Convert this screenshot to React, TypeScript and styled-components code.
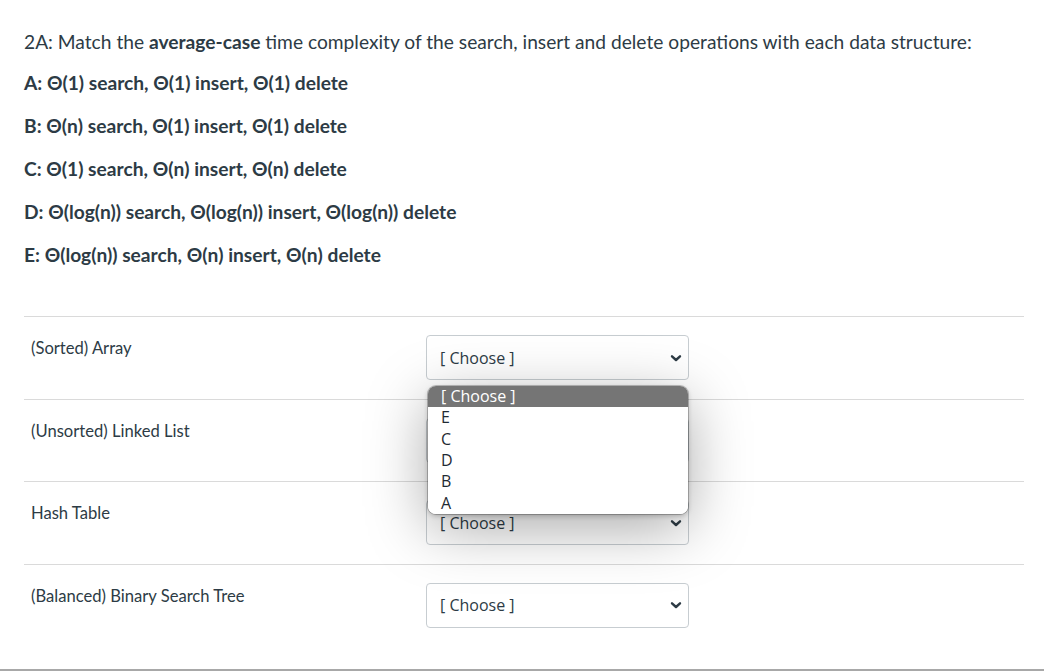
import { createGlobalStyle, styled } from "styled-components"

const GlobalStyle = createGlobalStyle`
html, body {
    margin: 0;
    padding: 0;
    background: #fff;
}
body {
    font-family: Lato, "Liberation Sans", sans-serif;
    color: #2d3b45;
}
`

const StyledPage = styled.div`
width: 1044px;
height: 672px;
overflow: hidden;
box-sizing: border-box;
display: flex;
flex-direction: column;
`

const StyledQuestion = styled.section`
padding: 28px 20px 0 24px;
flex: 1;

p {
    margin: 0;
    font-size: 19.2px;
    line-height: 27px;
}
p.title {
    margin-bottom: 14px;
}
p.answer {
    font-size: 19.2px;
    font-weight: 700;
    margin-bottom: 16px;
}
`

const StyledTable = styled.div`
margin-top: 48px;
width: 1000px;
display: flex;
flex-direction: column;
`

const StyledRow = styled.div`
box-sizing: border-box;
height: 82.67px;
border-top: 1px solid #dadada;
display: grid;
grid-template-columns: 402px 263px;

span.label {
    padding: 19px 0 0 7px;
    font-size: 16.6px;
    line-height: 24px;
}
`

const StyledSelect = styled.div`
position: relative;
margin-top: 18px;
box-sizing: border-box;
height: 45px;
border: 1px solid #c7cdd1;
border-radius: 4px;
background: #fff;
display: flex;
align-items: center;
justify-content: space-between;
padding: 0 6px 0 13px;

span {
    font-family: "Open Sans", "Noto Sans", sans-serif;
    font-size: 16px;
    color: #2d3b45;
}
svg {
    width: 12px;
    height: 12px;
}
`

const StyledPopup = styled.ul`
position: absolute;
top: 50px;
left: 1px;
width: 260px;
margin: 0;
padding: 0;
list-style: none;
background: #fff;
border-radius: 8px;
overflow: hidden;
box-shadow: 0 0 0 1px rgba(0, 0, 0, 0.22), 0 2px 5px rgba(0, 0, 0, 0.22), 0 14px 60px rgba(0, 0, 0, 0.34);
z-index: 5;
`

const StyledOption = styled.li<{ $active?: boolean }>`
height: 21.33px;
line-height: 21.33px;
padding-left: 13px;
font-family: "Open Sans", "Noto Sans", sans-serif;
font-size: 16px;
background: ${({ $active }) => ($active ? "#757575" : "#fff")};
color: ${({ $active }) => ($active ? "#fff" : "#1f2a33")};
`

const StyledFooter = styled.div`
height: 0;
border-top: 2px solid #a8a8a8;
margin-bottom: 1px;
`

const Chevron = () => (
    <svg viewBox="0 0 12 12">
        <path d="M2 4.3 L6 8 L10 4.3" fill="none" stroke="#2d3b45" strokeWidth="2.4" strokeLinecap="round" strokeLinejoin="round" />
    </svg>
)

export default function App() {
    const answers = [
        "A: Θ(1) search, Θ(1) insert, Θ(1) delete",
        "B: Θ(n) search, Θ(1) insert, Θ(1) delete",
        "C: Θ(1) search, Θ(n) insert, Θ(n) delete",
        "D: Θ(log(n)) search, Θ(log(n)) insert, Θ(log(n)) delete",
        "E: Θ(log(n)) search, Θ(n) insert, Θ(n) delete",
    ]

    const rows = [
        "(Sorted) Array",
        "(Unsorted) Linked List",
        "Hash Table",
        "(Balanced) Binary Search Tree",
    ]

    const options = ["[ Choose ]", "E", "C", "D", "B", "A"]

    return (
        <StyledPage>
            <GlobalStyle />
            <StyledQuestion>
                <p className="title">
                    2A: Match the <b>average-case</b> time complexity of the search, insert and delete operations with each data structure:
                </p>
                {answers.map((a, i) => (
                    <p className="answer" key={i}>{a}</p>
                ))}
                <StyledTable>
                    {rows.map((r, i) => (
                        <StyledRow key={i}>
                            <span className="label">{r}</span>
                            <StyledSelect>
                                <span>[ Choose ]</span>
                                <Chevron />
                                {i === 0 ?
                                    <StyledPopup>
                                        {options.map((o, j) => (
                                            <StyledOption key={j} $active={j === 0}>{o}</StyledOption>
                                        ))}
                                    </StyledPopup>
                                    : ''}
                            </StyledSelect>
                        </StyledRow>
                    ))}
                </StyledTable>
            </StyledQuestion>
            <StyledFooter />
        </StyledPage>
    )
}
